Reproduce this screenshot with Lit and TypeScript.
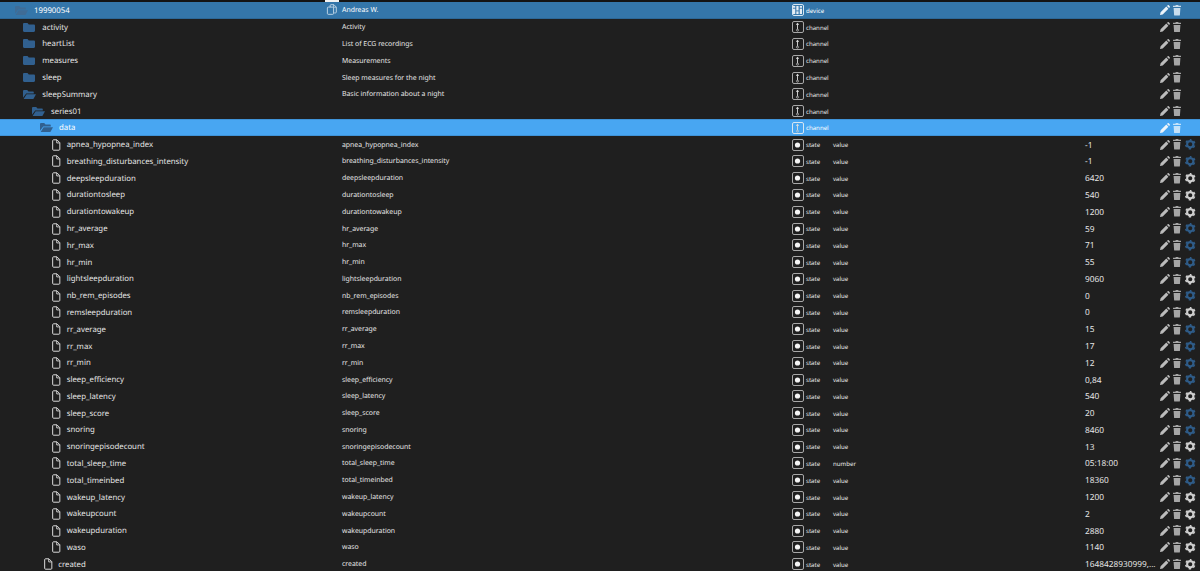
import { LitElement, html, css, svg } from "lit";
import { customElement } from "lit/decorators.js";

type Kind = "device" | "channel" | "state";
type Row = {
  name: string; depth: number; icon: "open" | "closed" | "file" | "ghost";
  desc?: string; kind: Kind; role?: string; value?: string;
  tone?: "top" | "sel"; gear?: "blue" | "white"; copy?: boolean;
};

const st = (name: string, value: string, gear: "blue" | "white", role = "value", depth = 3): Row =>
  ({ name, depth, icon: "file", desc: name, kind: "state", role, value, gear });

const rows: Row[] = [
  { name: "19990054", depth: 0, icon: "ghost", desc: "Andreas W.", kind: "device", tone: "top", copy: true },
  { name: "activity", depth: 1, icon: "closed", desc: "Activity", kind: "channel" },
  { name: "heartList", depth: 1, icon: "closed", desc: "List of ECG recordings", kind: "channel" },
  { name: "measures", depth: 1, icon: "closed", desc: "Measurements", kind: "channel" },
  { name: "sleep", depth: 1, icon: "closed", desc: "Sleep measures for the night", kind: "channel" },
  { name: "sleepSummary", depth: 1, icon: "open", desc: "Basic information about a night", kind: "channel" },
  { name: "series01", depth: 2, icon: "open", kind: "channel" },
  { name: "data", depth: 3, icon: "open", kind: "channel", tone: "sel" },
  st("apnea_hypopnea_index", "-1", "blue"),
  st("breathing_disturbances_intensity", "-1", "blue"),
  st("deepsleepduration", "6420", "white"),
  st("durationtosleep", "540", "white"),
  st("durationtowakeup", "1200", "white"),
  st("hr_average", "59", "blue"),
  st("hr_max", "71", "blue"),
  st("hr_min", "55", "blue"),
  st("lightsleepduration", "9060", "white"),
  st("nb_rem_episodes", "0", "blue"),
  st("remsleepduration", "0", "white"),
  st("rr_average", "15", "blue"),
  st("rr_max", "17", "blue"),
  st("rr_min", "12", "blue"),
  st("sleep_efficiency", "0,84", "blue"),
  st("sleep_latency", "540", "white"),
  st("sleep_score", "20", "blue"),
  st("snoring", "8460", "blue"),
  st("snoringepisodecount", "13", "white"),
  st("total_sleep_time", "05:18:00", "blue", "number"),
  st("total_timeinbed", "18360", "blue"),
  st("wakeup_latency", "1200", "white"),
  st("wakeupcount", "2", "white"),
  st("wakeupduration", "2880", "white"),
  st("waso", "1140", "white"),
  st("created", "1648428930999,...", "white", "value", 2),
];

const folderClosed = svg`<path d="M0 1.200C0 .5.5 0 1.200 0h3.300l1.300 1.400h5c.7 0 1.200.5 1.200 1.200v5.200C12 8.500 11.500 9 10.800 9H1.200C.5 9 0 8.500 0 7.800z" fill="currentColor"/>`;
const folderOpen = svg`<path d="M0 1.200C0 .5.5 0 1.200 0h3l1.300 1.400h4.300c.6 0 1 .4 1 1V3.400H3.200L0 7.800z" fill="currentColor"/><path d="M3.600 4.200H13l-2.600 4.800H.6z" fill="currentColor"/>`;
const fileIcon = svg`<path d="M.7 1.500C.7 1 1.100.6 1.600.6h3.600l3.100 3.100v7c0 .5-.4.9-.9.900H1.600c-.5 0-.9-.4-.9-.9z" fill="none" stroke="currentColor" stroke-width="1"/><path d="M5 .8v3.100h3.100" fill="none" stroke="currentColor" stroke-width=".9"/>`;
const pencil = svg`<path d="M0 10l.6-2.700L6.300 1.600l2.100 2.100L2.700 9.400zM7 .9l.5-.5c.4-.4 1-.4 1.400 0l.7.7c.4.4.4 1 0 1.400l-.5.5z" fill="currentColor"/>`;
const trash = svg`<path d="M2.800 0h2.400l.4.800H8v1.300H0V.8h2.400zM.6 2.900h6.800l-.5 7.100c0 .3-.3.6-.6.600H1.700c-.3 0-.6-.3-.6-.6z" fill="currentColor"/>`;
const gear = svg`<g fill="none" stroke="currentColor"><circle cx="5" cy="5" r="3" stroke-width="2"/><circle cx="5" cy="5" r="4.300" stroke-width="1.500" stroke-dasharray="2.200 2.303" stroke-dashoffset="1.100" transform="rotate(-90 5 5)"/></g>`;
const copyIcon = svg`<path d="M6 4.500V2.200C6 1.500 6.500 1 7.200 1h4.300L15 4.500v7.300c0 .7-.5 1.200-1.200 1.200H12" fill="none" stroke="currentColor" stroke-width="1.200"/><path d="M11 1.200v3.500h3.800" fill="none" stroke="currentColor" stroke-width="1"/><rect x="2" y="4.500" width="9" height="10.500" rx="1.200" fill="none" stroke="currentColor" stroke-width="1.200"/>`;

@customElement("app-root")
export class AppRoot extends LitElement {
  static styles = css`
    :host {
      display: block; width: 1200px; height: 571px; overflow: hidden; position: relative;
      background: #1f1f1f; color: #e6e6e6;
      font-family: "Noto Sans", "Liberation Sans", sans-serif;
      text-rendering: geometricPrecision;
    }
    .tree { border-top: 2.500px solid #141414; }
    .stub { position: absolute; left: 325px; top: 0; width: 14px; height: 1.500px; background: #f2f2f2; }
    .row {
      display: grid; grid-template-columns: 342px 450px 41px 252px 75px 1fr;
      align-items: center; height: 16.790px; white-space: nowrap;
    }
    .row.top { background: #3476aa; box-shadow: inset 0 -1px 0 #2c6797; color: #fff; }
    .row.sel { background: #48a6f2; box-shadow: inset 0 1px 0 #3f93d8, inset 0 -1px 0 #3f93d8; color: #fff; }
    .name { display: flex; align-items: center; font-size: 7.800px; }
    .txt { padding-top: 1px; }
    .d0 { padding-left: 15px; }
    .d1 { padding-left: 23.300px; }
    .d2 { padding-left: 32px; }
    .d3 { padding-left: 40px; }
    .d2.file { padding-left: 43.500px; }
    .d3.file { padding-left: 52px; }
    .ico { width: 13px; height: 9px; flex: none; margin-right: 6px; color: #31608f; overflow: visible; }
    .ico.ghost { color: #3f6c96; }
    .ico.fileico { width: 8.500px; height: 12px; color: #e6e6e6; margin-right: 6.200px; }
    .desc { position: relative; font-size: 6.900px; padding-top: 1px; }
    .copy { position: absolute; left: -16px; top: 50%; width: 11px; height: 11px; margin-top: -6px; color: #d4e3ef; }
    .kind { display: flex; align-items: center; gap: 2.500px; font-size: 6.100px; }
    .badge {
      width: 11.500px; height: 12px; box-sizing: border-box; border: 1px solid #a8a8a8;
      border-radius: 2px; display: flex; align-items: center; justify-content: center; flex: none;
    }
    .top .badge, .sel .badge { border-color: #d6e6f2; }
    .badge svg { display: block; width: 9px; height: 10px; }
    .role { font-size: 6.100px; }
    .value { font-size: 8.300px; padding-top: 1px; }
    .acts { display: flex; align-items: center; gap: 3.300px; }
    .pen { width: 10px; height: 10px; flex: none; color: #bcbcbc; }
    .bin { width: 8px; height: 10.600px; flex: none; color: #a6a6a6; }
    .gear { width: 10.500px; height: 10.500px; flex: none; margin-left: .500px; overflow: visible; }
    .gear.white { color: #cfcfcf; }
    .gear.blue { color: #2f5c88; }
    .top .pen, .sel .pen { color: #eef5fb; }
    .top .bin { color: #c9deef; }
    .sel .bin { color: #c4e2fa; }
  `;

  private badge(k: Kind) {
    if (k === "device") {
      return svg`<svg viewBox="0 0 10 11"><g fill="#e6eef5"><rect x="0" y="1" width="2.500" height="2"/><rect x="3.700" y="1" width="2.500" height="5"/><rect x="7.500" y="1" width="2.500" height="2"/><rect x="0" y="4" width="2.500" height="6"/><rect x="3.700" y="7" width="2.500" height="3"/><rect x="7.500" y="4" width="2.500" height="6"/></g></svg>`;
    }
    if (k === "channel") {
      return svg`<svg viewBox="0 0 10 11"><path d="M5 1v7" stroke="#ddd" stroke-width="1"/><path d="M3.500 2.500h3" stroke="#ddd" stroke-width="1.200"/><circle cx="5" cy="9" r="1.100" fill="none" stroke="#ccc" stroke-width=".8"/></svg>`;
    }
    return svg`<svg viewBox="0 0 10 11"><circle cx="5" cy="5.500" r="2.900" fill="#f4f4f4"/></svg>`;
  }

  render() {
    return html`<div class="stub"></div><div class="tree">
      ${rows.map((r) => html`
        <div class="row ${r.tone ?? ""}">
          <div class="name d${r.depth} ${r.icon === "file" ? "file" : ""}">
            ${r.icon === "file"
              ? html`<svg class="ico fileico" viewBox="0 0 9 12.200">${fileIcon}</svg>`
              : html`<svg class="ico ${r.icon === "ghost" ? "ghost" : ""}" viewBox="0 0 13 9">${r.icon === "closed" ? folderClosed : folderOpen}</svg>`}
            <span class="txt">${r.name}</span>
          </div>
          <div class="desc">
            ${r.copy ? html`<svg class="copy" viewBox="0 0 16 16">${copyIcon}</svg>` : ""}
            <span>${r.desc ?? ""}</span>
          </div>
          <div class="kind"><span class="badge">${this.badge(r.kind)}</span><span>${r.kind}</span></div>
          <div class="role">${r.role ?? ""}</div>
          <div class="value">${r.value ?? ""}</div>
          <div class="acts">
            <svg class="pen" viewBox="0 0 10 10">${pencil}</svg>
            <svg class="bin" viewBox="0 0 8 10.600">${trash}</svg>
            ${r.gear ? html`<svg class="gear ${r.gear}" viewBox="0 0 10 10">${gear}</svg>` : ""}
          </div>
        </div>`)}
    </div>`;
  }
}
